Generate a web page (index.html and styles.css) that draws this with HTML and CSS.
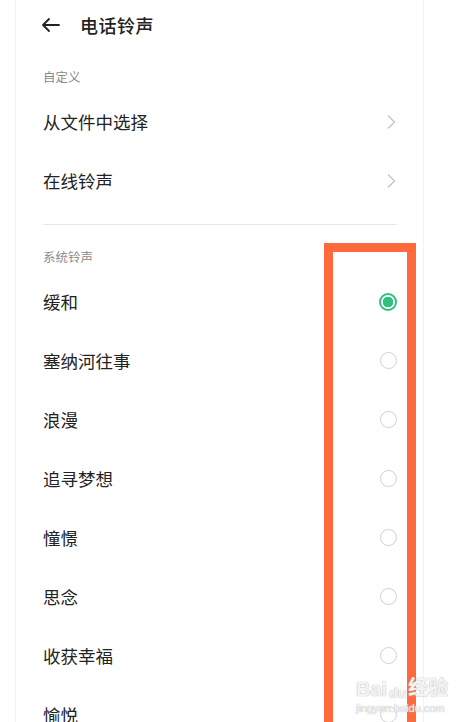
FILE: index.html
```html
<!DOCTYPE html>
<html lang="zh-CN">
<head>
    <meta charset="UTF-8">
    <meta name="viewport" content="width=device-width, initial-scale=1.0">
    <title>电话铃声</title>
    <link rel="stylesheet" href="styles.css">
</head>
<body>
    <div class="phone">
        <div class="header">
            <svg class="back" width="20" height="16" viewBox="0 0 20 16">
                <path d="M18 8H2M8 2L2 8l6 6" fill="none" stroke="#222" stroke-width="1.8" stroke-linecap="round" stroke-linejoin="round"/>
            </svg>
            <span class="title">电话铃声</span>
        </div>

        <div class="label first">自定义</div>
        <div class="row">
            <span>从文件中选择</span>
            <svg class="chevron" width="10" height="16" viewBox="0 0 10 16"><path d="M2 1.5L8.5 8 2 14.5" fill="none" stroke="#c4c4c4" stroke-width="1.3"/></svg>
        </div>
        <div class="row">
            <span>在线铃声</span>
            <svg class="chevron" width="10" height="16" viewBox="0 0 10 16"><path d="M2 1.5L8.5 8 2 14.5" fill="none" stroke="#c4c4c4" stroke-width="1.3"/></svg>
        </div>
        <div class="divider"></div>

        <div class="label">系统铃声</div>
        <div class="row"><span>缓和</span><span class="radio checked"></span></div>
        <div class="row"><span>塞纳河往事</span><span class="radio"></span></div>
        <div class="row"><span>浪漫</span><span class="radio"></span></div>
        <div class="row"><span>追寻梦想</span><span class="radio"></span></div>
        <div class="row"><span>憧憬</span><span class="radio"></span></div>
        <div class="row"><span>思念</span><span class="radio"></span></div>
        <div class="row"><span>收获幸福</span><span class="radio"></span></div>
        <div class="row"><span>愉悦</span><span class="radio"></span></div>
    </div>

    <!-- annotation box over the radio column -->
    <div class="highlight"></div>

    <div class="watermark">
        <div class="wm-top"><span>Bai</span><span class="paw">du</span><span>经验</span></div>
        <div class="wm-url">jingyan.baidu.com</div>
    </div>
</body>
</html>
```

FILE: styles.css
```css
body {
    margin: 0;
    background: #fff;
    font-family: "Noto Sans CJK SC", "Noto Sans", sans-serif;
    color: #222;
    overflow: hidden;
    height: 722px;
}

.phone {
    margin-left: 15px;
    width: 409px;
    height: 722px;
    border-left: 1px solid #f2f2f2;
    border-right: 1px solid #f2f2f2;
    padding-left: 27px;
    padding-right: 26px;
    box-sizing: border-box;
}

.header {
    height: 50px;
    display: flex;
    align-items: center;
    margin-left: -2px;
}

.back {
    margin-right: 19px;
}

.title {
    font-size: 18px;
    font-weight: 500;
    letter-spacing: 0.5px;
}

.label {
    height: 30px;
    line-height: 30px;
    font-size: 12.5px;
    color: #8a8a8a;
    margin-top: 17px;
}

.label.first {
    margin-top: 12px;
}

.row {
    height: 59px;
    display: flex;
    align-items: center;
    justify-content: space-between;
    font-size: 17.5px;
}

.chevron {
    margin-right: 1px;
}

.divider {
    height: 1px;
    background: #e8e8e8;
    margin-top: 14px;
}

.radio {
    width: 15px;
    height: 15px;
    border: 1.5px solid #cfcfcf;
    border-radius: 50%;
    margin-right: 0;
}

.radio.checked {
    border: 2px solid #2fc27b;
    width: 14px;
    height: 14px;
    background: radial-gradient(circle, #2fc27b 0 5px, #fff 5.5px);
}

.highlight {
    position: absolute;
    left: 324px;
    top: 243px;
    width: 92px;
    height: 520px;
    border: 9px solid #ff6a3c;
    box-sizing: border-box;
}

.watermark {
    position: absolute;
    left: 356px;
    top: 672px;
    font-family: "Liberation Sans", "Noto Sans CJK SC", sans-serif;
    color: rgba(255, 255, 255, 0.85);
    text-shadow: 0 0 1px #bbb, 0 0 1px #bbb;
}

.wm-top {
    font-size: 20px;
    font-weight: bold;
    display: flex;
    align-items: flex-end;
    gap: 2px;
}

.paw {
    font-size: 14px;
}

.wm-url {
    font-size: 11px;
    margin-top: 1px;
}
```
